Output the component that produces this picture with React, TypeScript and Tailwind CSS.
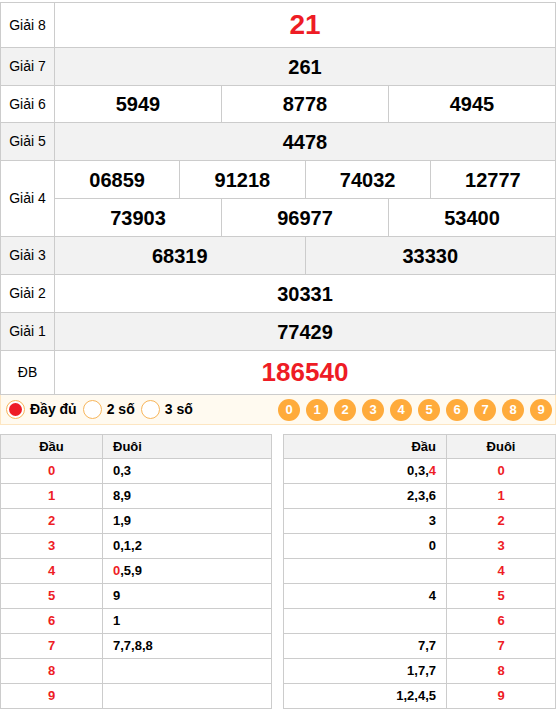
const font = { fontFamily: '"Liberation Sans", Arial, sans-serif' }

const RED = "text-[#ee1c25]"

function Row({
  label,
  gray,
  children,
}: {
  label: string
  gray?: boolean
  children: React.ReactNode
}) {
  return (
    <div className={`flex border-b border-[#cccccc] ${gray ? "bg-[#f2f2f2]" : "bg-white"}`}>
      <div className="flex w-[54px] shrink-0 items-center justify-center border-r border-[#cccccc] text-[14px] text-black">
        {label}
      </div>
      <div className="flex flex-1 flex-col">{children}</div>
    </div>
  )
}

function Cells({ nums, h = "h-[37px]", last = true }: { nums: string[]; h?: string; last?: boolean }) {
  return (
    <div className={`flex ${h} ${last ? "" : "border-b border-[#cccccc]"}`}>
      {nums.map((n, i) => (
        <div
          key={i}
          className={`flex flex-1 items-center justify-center text-[20px] font-bold text-black ${
            i < nums.length - 1 ? "border-r border-[#cccccc]" : ""
          }`}
        >
          {n}
        </div>
      ))}
    </div>
  )
}

const dau: [string, React.ReactNode][] = [
  ["0", "0,3"],
  ["1", "8,9"],
  ["2", "1,9"],
  ["3", "0,1,2"],
  ["4", <><span className={RED}>0</span>,5,9</>],
  ["5", "9"],
  ["6", "1"],
  ["7", "7,7,8,8"],
  ["8", ""],
  ["9", ""],
]

const duoi: [React.ReactNode, string][] = [
  [<>0,3,<span className={RED}>4</span></>, "0"],
  ["2,3,6", "1"],
  ["3", "2"],
  ["0", "3"],
  ["", "4"],
  ["4", "5"],
  ["", "6"],
  ["7,7", "7"],
  ["1,7,7", "8"],
  ["1,2,4,5", "9"],
]

export default function App() {
  return (
    <div className="w-[557px] bg-white pt-[2px]" style={font}>
      <div className="w-[556px] border-l border-r border-t border-[#cccccc]">
        <Row label="Giải 8">
          <div className={`flex h-[44px] items-center justify-center text-[28px] font-bold ${RED}`}>21</div>
        </Row>
        <Row label="Giải 7" gray>
          <Cells nums={["261"]} />
        </Row>
        <Row label="Giải 6">
          <Cells nums={["5949", "8778", "4945"]} h="h-[36px]" />
        </Row>
        <Row label="Giải 5" gray>
          <Cells nums={["4478"]} />
        </Row>
        <Row label="Giải 4">
          <Cells nums={["06859", "91218", "74032", "12777"]} last={false} h="h-[38px]" />
          <Cells nums={["73903", "96977", "53400"]} />
        </Row>
        <Row label="Giải 3" gray>
          <Cells nums={["68319", "33330"]} />
        </Row>
        <Row label="Giải 2">
          <Cells nums={["30331"]} />
        </Row>
        <Row label="Giải 1" gray>
          <Cells nums={["77429"]} />
        </Row>
        <Row label="ĐB">
          <div className={`flex h-[43px] items-center justify-center text-[26px] font-bold ${RED}`}>186540</div>
        </Row>
      </div>

      <div className="flex h-[30px] w-[556px] items-center border-b border-l border-r border-[#fde6c2] bg-[#fffaf0] pl-[5px] pr-[3px]">
        <div className="flex items-center gap-[5px]">
          <span className="flex h-[19px] w-[19px] items-center justify-center rounded-full border border-[#f7b55a] bg-white">
            <span className="h-[13px] w-[13px] rounded-full bg-[#ee1c25]" />
          </span>
          <span className="text-[14px] font-bold text-black">Đầy đủ</span>
        </div>
        <div className="ml-[6px] flex items-center gap-[5px]">
          <span className="h-[19px] w-[19px] rounded-full border border-[#f7b55a] bg-white" />
          <span className="text-[14px] font-bold text-black">2 số</span>
        </div>
        <div className="ml-[6px] flex items-center gap-[5px]">
          <span className="h-[19px] w-[19px] rounded-full border border-[#f7b55a] bg-white" />
          <span className="text-[14px] font-bold text-black">3 số</span>
        </div>
        <div className="ml-auto flex gap-[6px]">
          {["0", "1", "2", "3", "4", "5", "6", "7", "8", "9"].map((n) => (
            <span
              key={n}
              className="flex h-[22px] w-[22px] items-center justify-center rounded-full bg-[#ffab3b] text-[13px] font-bold text-white"
            >
              {n}
            </span>
          ))}
        </div>
      </div>

      <div className="mt-[9px] flex w-[556px] justify-between">
        <div className="w-[272px] border-l border-r border-t border-[#cccccc] text-[13px] font-bold">
          <div className="flex h-[24px] border-b border-[#cccccc] bg-[#f2f2f2] text-black">
            <div className="flex w-[102px] items-center justify-center border-r border-[#cccccc]">Đầu</div>
            <div className="flex flex-1 items-center pl-[10px]">Đuôi</div>
          </div>
          {dau.map(([d, v]) => (
            <div key={d} className="flex h-[25px] border-b border-[#cccccc]">
              <div className={`flex w-[102px] items-center justify-center border-r border-[#cccccc] ${RED}`}>{d}</div>
              <div className="flex flex-1 items-center pl-[10px] text-black">{v}</div>
            </div>
          ))}
        </div>

        <div className="w-[273px] border-l border-r border-t border-[#cccccc] text-[13px] font-bold">
          <div className="flex h-[24px] border-b border-[#cccccc] bg-[#f2f2f2] text-black">
            <div className="flex w-[163px] items-center justify-end border-r border-[#cccccc] pr-[10px]">Đầu</div>
            <div className="flex flex-1 items-center justify-center">Đuôi</div>
          </div>
          {duoi.map(([v, d], i) => (
            <div key={i} className="flex h-[25px] border-b border-[#cccccc]">
              <div className="flex w-[163px] items-center justify-end border-r border-[#cccccc] pr-[10px] text-black">
                {v}
              </div>
              <div className={`flex flex-1 items-center justify-center ${RED}`}>{d}</div>
            </div>
          ))}
        </div>
      </div>
    </div>
  )
}
